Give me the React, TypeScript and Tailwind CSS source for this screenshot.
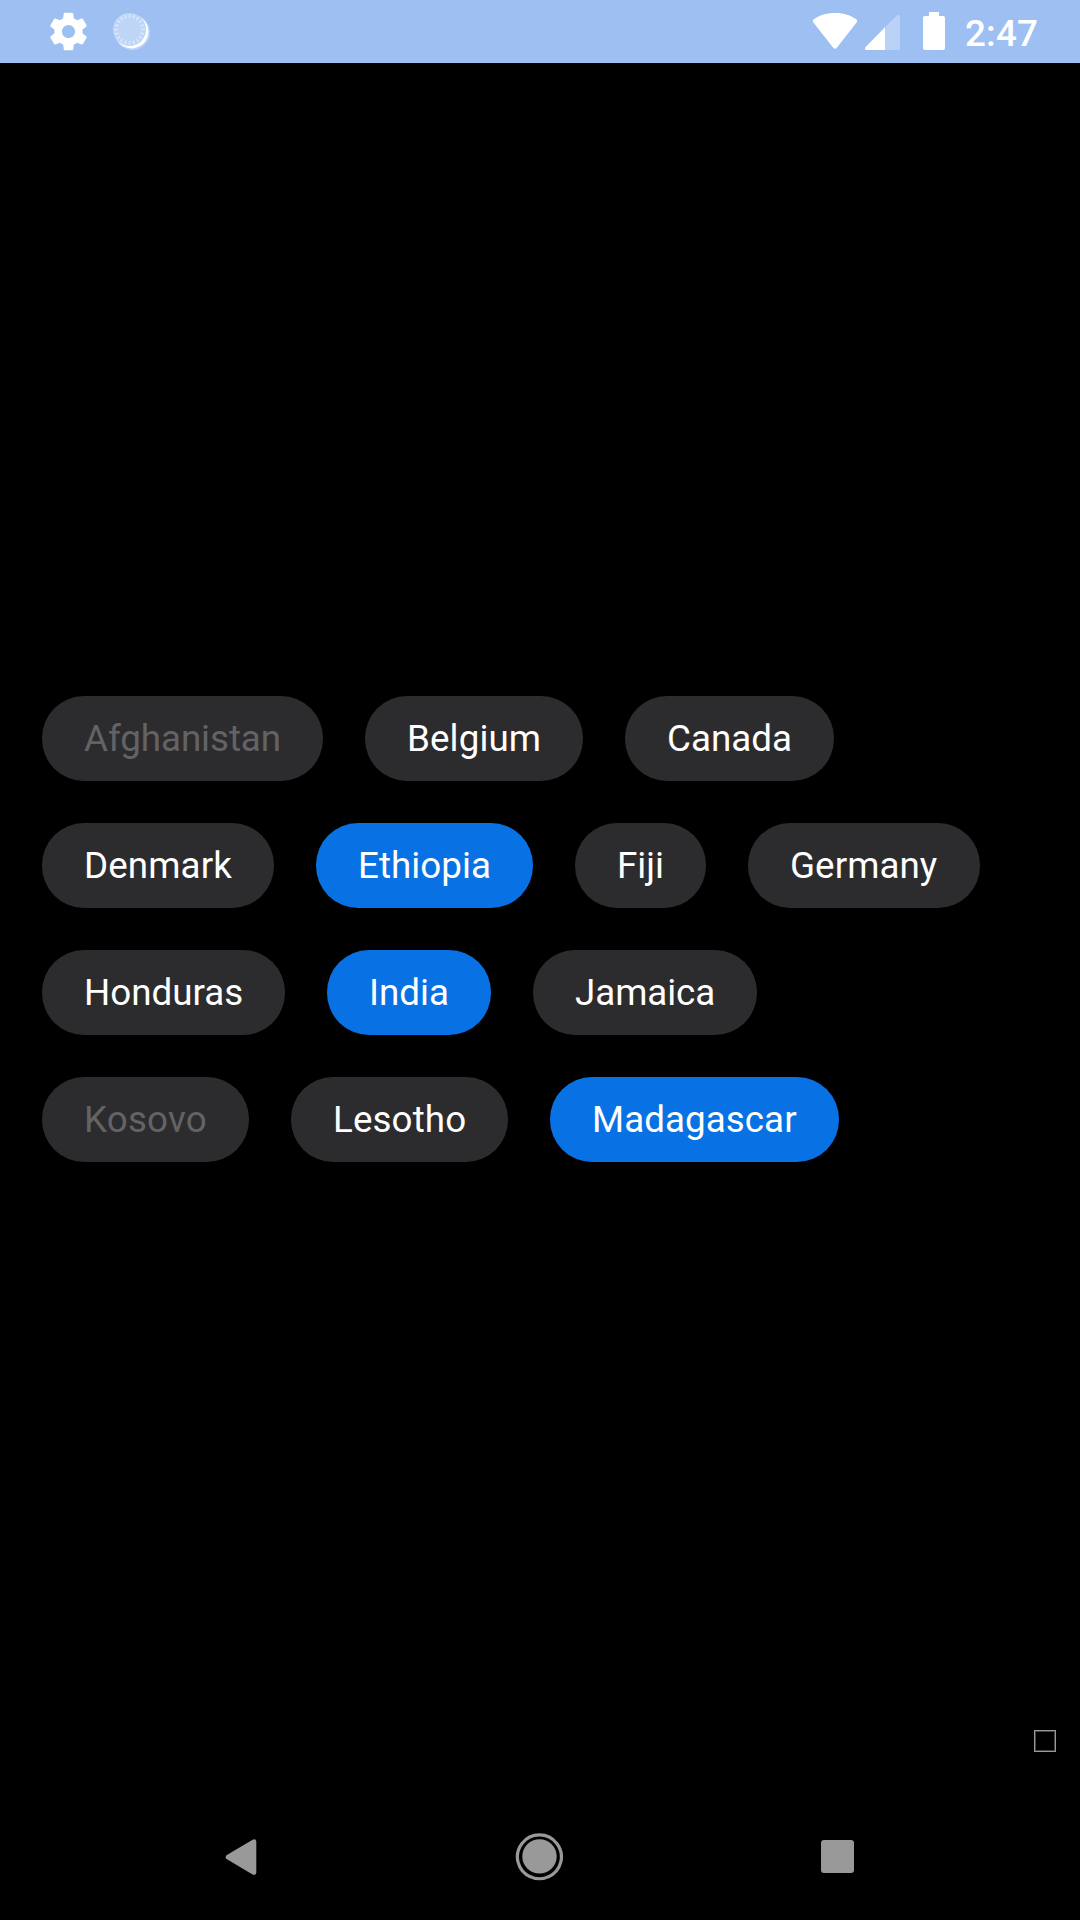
import React from "react";

type Chip = { label: string; state?: "selected" | "disabled"; width: string; tracking?: string };

const rows: Chip[][] = [
  [
    { label: "Afghanistan", state: "disabled", width: "w-[281px]", tracking: "tracking-[-0.06px]" },
    { label: "Belgium", width: "w-[218px]", tracking: "tracking-[0.12px]" },
    { label: "Canada", width: "w-[209px]" },
  ],
  [
    { label: "Denmark", width: "w-[232px]", tracking: "tracking-[0.12px]" },
    { label: "Ethiopia", state: "selected", width: "w-[217px]", tracking: "tracking-[0.06px]" },
    { label: "Fiji", width: "w-[131px]" },
    { label: "Germany", width: "w-[232px]", tracking: "tracking-[0.06px]" },
  ],
  [
    { label: "Honduras", width: "w-[243px]" },
    { label: "India", state: "selected", width: "w-[164px]" },
    { label: "Jamaica", width: "w-[224px]", tracking: "tracking-[-0.06px]" },
  ],
  [
    { label: "Kosovo", state: "disabled", width: "w-[207px]", tracking: "tracking-[0.2px]" },
    { label: "Lesotho", width: "w-[217px]", tracking: "tracking-[0.12px]" },
    { label: "Madagascar", state: "selected", width: "w-[289px]", tracking: "tracking-[0.06px]" },
  ],
];

const ticks = Array.from({ length: 20 }, (_, i) => (i * Math.PI) / 10);

function StatusBar() {
  return (
    <header className="flex h-[63px] items-start justify-between bg-[#9dbff2] text-white">
      <div className="flex">
        <svg className="ml-[46px] mt-[9px] size-[45px]" viewBox="0 0 24 24" fill="currentColor">
          <path d="M19.43 12.98c.04-.32.07-.64.07-.98s-.03-.66-.07-.98l2.11-1.65c.19-.15.24-.42.12-.64l-2-3.46c-.12-.22-.39-.3-.61-.22l-2.49 1c-.52-.4-1.08-.73-1.69-.98l-.38-2.65C14.46 2.18 14.25 2 14 2h-4c-.25 0-.46.18-.49.42l-.38 2.65c-.61.25-1.17.59-1.69.98l-2.49-1c-.23-.09-.49 0-.61.22l-2 3.46c-.13.22-.07.49.12.64l2.11 1.65c-.04.32-.07.65-.07.98s.03.66.07.98l-2.11 1.65c-.19.15-.24.42-.12.64l2 3.46c.12.22.39.3.61.22l2.49-1c.52.4 1.08.73 1.69.98l.38 2.65c.03.24.24.42.49.42h4c.25 0 .46-.18.49-.42l.38-2.65c.61-.25 1.17-.59 1.69-.98l2.49 1c.23.09.49 0 .61-.22l2-3.46c.12-.22.07-.49-.12-.64l-2.11-1.65zM12 15.5c-1.93 0-3.5-1.57-3.5-3.5s1.57-3.5 3.5-3.5 3.5 1.57 3.5 3.5-1.57 3.5-3.5 3.5z" />
        </svg>
        <svg className="ml-[19px] mt-[9px] size-[42px]" viewBox="0 0 42 42">
          <circle cx="22.4" cy="23.4" r="17.6" fill="#fff" fillOpacity=".3" />
          <circle cx="21.5" cy="22.5" r="16.9" fill="#fff" />
          <circle cx="19.5" cy="20.5" r="16.6" fill="#bfd5f6" />
          {ticks.map((a) => (
            <line
              key={a}
              x1={19.5 + 11.6 * Math.cos(a)}
              y1={20.5 + 11.6 * Math.sin(a)}
              x2={19.5 + 15.4 * Math.cos(a)}
              y2={20.5 + 15.4 * Math.sin(a)}
              stroke="#dbe8fa"
              strokeWidth="1.5"
            />
          ))}
        </svg>
      </div>
      <div className="flex">
        <svg className="h-[63px] w-[46px]" viewBox="812 0 46 63" fill="currentColor">
          <path d="M813.2 22.3Q812 20.5 813.8 19.3C819 15.4 826 13 835 13S851 15.4 856.2 19.3Q858 20.5 856.8 22.3L837 47.6Q835 50 833 47.6Z" />
        </svg>
        <svg className="ml-[7px] h-[63px] w-[35px]" viewBox="865 0 35 63" fill="currentColor">
          <path fillOpacity=".3" d="M885 27.3L896.8 15.5Q899 13.8 900 16.2V48.5Q900 50 898.5 50H885Z" />
          <path d="M885 27.3V50H866Q864 49.2 865.4 47.2Z" />
        </svg>
        <svg className="ml-[23px] h-[63px] w-[22px]" viewBox="923 0 22 63" fill="currentColor">
          <path d="M929 12h10v4h4.3q1.7 0 1.7 1.7v30.6q0 1.7-1.7 1.7h-18.6q-1.7 0-1.7-1.7V17.7q0-1.7 1.7-1.7h4.3z" />
        </svg>
        <span className="ml-5 mr-[41.5px] mt-3 w-[73.5px] whitespace-nowrap text-[36.75px] font-medium leading-[43px] tracking-[0.15px]">2:47</span>
      </div>
    </header>
  );
}

function ChipView({ chip }: { chip: Chip }) {
  const tone =
    chip.state === "selected"
      ? "bg-[#0871e3] text-white"
      : chip.state === "disabled"
        ? "bg-[#2c2c2e] text-[#636366]"
        : "bg-[#2c2c2e] text-white";
  return (
    <button
      className={`h-[85px] shrink-0 rounded-[42px] pl-[42px] text-left text-[36.75px] leading-[43px] whitespace-nowrap ${chip.width} ${chip.tracking ?? ""} ${tone}`}
    >
      {chip.label}
    </button>
  );
}

export default function App() {
  return (
    <div className="flex h-[1920px] w-[1080px] flex-col overflow-hidden bg-black font-['Roboto',sans-serif]">
      <StatusBar />
      <main className="flex h-[1731px] flex-col">
        <div className="mt-[633px] flex flex-col gap-[42px] pl-[42px]">
          {rows.map((row) => (
            <div key={row[0].label} className="flex gap-[42px]">
              {row.map((chip) => (
                <ChipView key={chip.label} chip={chip} />
              ))}
            </div>
          ))}
        </div>
        <div className="mr-6 mt-[568px] size-[22px] self-end border border-[#999] shadow-[inset_0_0_0_1px_#444]" />
      </main>
      <nav className="flex h-[126px] items-center text-[#999]">
        <svg className="ml-[225px] h-[38px] w-[32px]" viewBox="225 1838 32 38" fill="currentColor">
          <path d="M226.5 1855.3L252.6 1839.7Q256 1838.2 256.3 1841.5V1872.5Q256 1875.8 252.6 1874.6L226.5 1859Q224.8 1857.2 226.5 1855.3Z" />
        </svg>
        <svg className="ml-[258px] size-[50px]" viewBox="0 0 50 50">
          <path
            d="M15.8 45.1A22 22 0 1 1 33 45.1"
            fill="none"
            stroke="currentColor"
            strokeWidth="3.2"
          />
          <path d="M14.6 44.3Q24.4 49.3 34.2 44.3" fill="none" stroke="currentColor" strokeWidth="3" />
          <circle cx="24.5" cy="24.4" r="17.2" fill="currentColor" />
        </svg>
        <div className="-mt-px ml-[256px] size-[33px] rounded-[3px] bg-[#999]" />
      </nav>
    </div>
  );
}
